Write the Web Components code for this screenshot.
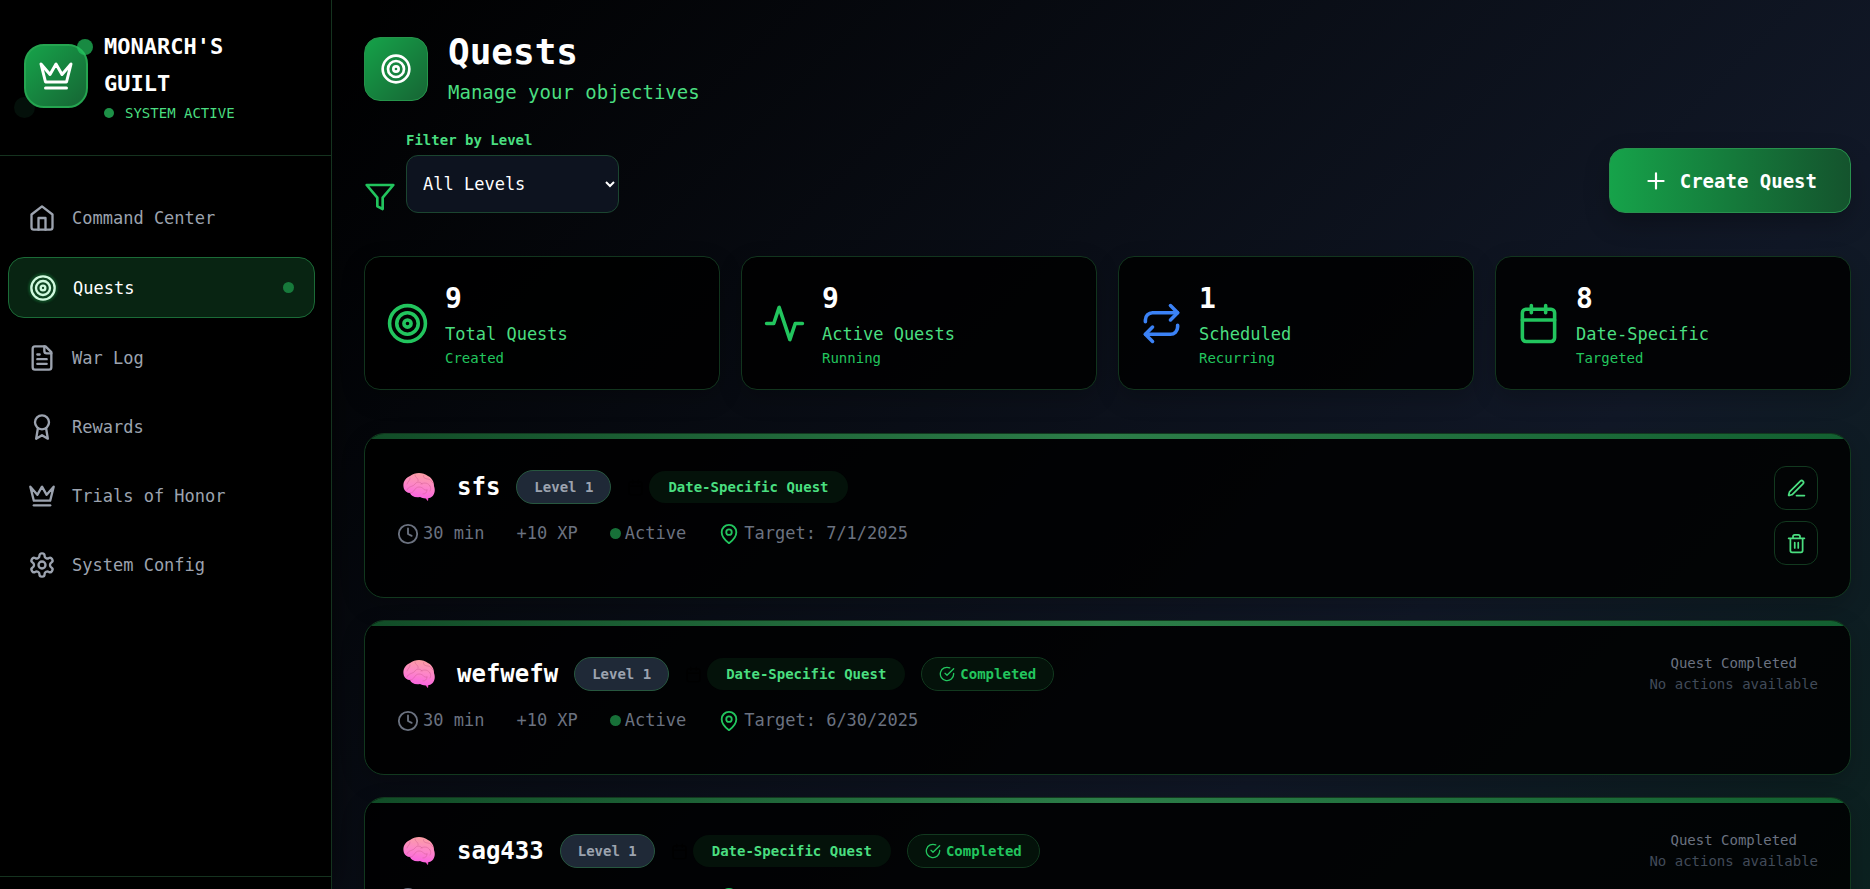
<!DOCTYPE html>
<html lang="en">
<head>
<meta charset="utf-8">
<meta name="viewport" content="width=device-width, initial-scale=1">
<title>Quests - Monarch's Guilt</title>
<style>
  body{
    margin: 0;
    background: #000;
    color: #fff;
    font-family: "DejaVu Sans Mono", "Liberation Mono", monospace;
    font-size: 17px;
  }
</style>
</head>
<body>
<guild-app>
  <guild-sidebar slot="sidebar">
    <nav-item icon="home">Command Center</nav-item>
    <nav-item icon="target" active>Quests</nav-item>
    <nav-item icon="file">War Log</nav-item>
    <nav-item icon="award">Rewards</nav-item>
    <nav-item icon="crown">Trials of Honor</nav-item>
    <nav-item icon="settings">System Config</nav-item>
  </guild-sidebar>

  <page-header icon="target">
    <span slot="title">Quests</span>
    <span slot="subtitle">Manage your objectives</span>
  </page-header>
  <quest-toolbar></quest-toolbar>
  <stat-grid>
    <stat-card icon="target" value="9" label="Total Quests" note="Created"></stat-card>
    <stat-card icon="activity" value="9" label="Active Quests" note="Running"></stat-card>
    <stat-card icon="repeat" value="1" label="Scheduled" note="Recurring" class="blue"></stat-card>
    <stat-card icon="calendar" value="8" label="Date-Specific" note="Targeted"></stat-card>
  </stat-grid>
  <quest-list>
    <quest-card level="1" time="30 min" xp="10" target="7/1/2025">sfs</quest-card>
    <quest-card level="1" time="30 min" xp="10" target="6/30/2025" completed>wefwefw</quest-card>
    <quest-card level="1" time="30 min" xp="10" target="6/30/2025" completed>sag433</quest-card>
  </quest-list>
</guild-app>

<script>
const ICONS = {
  home: '<path d="m3 9 9-7 9 7v11a2 2 0 0 1-2 2H5a2 2 0 0 1-2-2z"/><path d="M9 22V12h6v10"/>',
  target: '<circle cx="12" cy="12" r="10"/><circle cx="12" cy="12" r="6"/><circle cx="12" cy="12" r="2"/>',
  file: '<path d="M15 2H6a2 2 0 0 0-2 2v16a2 2 0 0 0 2 2h12a2 2 0 0 0 2-2V7z"/><path d="M14 2v4a2 2 0 0 0 2 2h4M10 9H8M16 13H8M16 17H8"/>',
  award: '<circle cx="12" cy="8" r="6"/><path d="M15.477 12.89 17 22l-5-3-5 3 1.523-9.11"/>',
  crown: '<path d="m2 4 3 12h14l3-12-6 7-4-7-4 7z"/><path d="M5 20h14"/>',
  settings: '<path d="M12.22 2h-.44a2 2 0 0 0-2 2v.18a2 2 0 0 1-1 1.73l-.43.25a2 2 0 0 1-2 0l-.15-.08a2 2 0 0 0-2.73.73l-.22.38a2 2 0 0 0 .73 2.73l.15.1a2 2 0 0 1 1 1.72v.51a2 2 0 0 1-1 1.74l-.15.09a2 2 0 0 0-.73 2.73l.22.38a2 2 0 0 0 2.73.73l.15-.08a2 2 0 0 1 2 0l.43.25a2 2 0 0 1 1 1.73V20a2 2 0 0 0 2 2h.44a2 2 0 0 0 2-2v-.18a2 2 0 0 1 1-1.73l.43-.25a2 2 0 0 1 2 0l.15.08a2 2 0 0 0 2.73-.73l.22-.39a2 2 0 0 0-.73-2.73l-.15-.08a2 2 0 0 1-1-1.74v-.5a2 2 0 0 1 1-1.74l.15-.09a2 2 0 0 0 .73-2.73l-.22-.38a2 2 0 0 0-2.73-.73l-.15.08a2 2 0 0 1-2 0l-.43-.25a2 2 0 0 1-1-1.73V4a2 2 0 0 0-2-2z"/><circle cx="12" cy="12" r="3"/>',
  filter: '<path d="M22 3H2l8 9.46V19l4 2v-8.54z"/>',
  plus: '<path d="M5 12h14M12 5v14"/>',
  activity: '<path d="M22 12h-4l-3 9L9 3l-3 9H2"/>',
  repeat: '<path d="m17 2 4 4-4 4"/><path d="M3 11v-1a4 4 0 0 1 4-4h14"/><path d="m7 22-4-4 4-4"/><path d="M21 13v1a4 4 0 0 1-4 4H3"/>',
  calendar: '<rect x="3" y="4" width="18" height="18" rx="2"/><path d="M16 2v4M8 2v4M3 10h18"/>',
  clock: '<circle cx="12" cy="12" r="10"/><path d="M12 6v6l4 2"/>',
  pin: '<path d="M20 10c0 6-8 12-8 12s-8-6-8-12a8 8 0 0 1 16 0z"/><circle cx="12" cy="10" r="3"/>',
  check: '<path d="M22 11.08V12a10 10 0 1 1-5.93-9.14"/><path d="M22 4 12 14.01l-3-3"/>',
  edit: '<path d="M12 20h9"/><path d="M16.376 3.622a1 1 0 0 1 3.002 3.002L7.368 18.635a2 2 0 0 1-.855.506l-2.872.838a.5.5 0 0 1-.62-.62l.838-2.872a2 2 0 0 1 .506-.854z"/>',
  trash: '<path d="M3 6h18M19 6v14a2 2 0 0 1-2 2H7a2 2 0 0 1-2-2V6M8 6V4a2 2 0 0 1 2-2h4a2 2 0 0 1 2 2v2M10 11v6M14 11v6"/>'
};

//Base de todos los componentes
class GuildElement extends HTMLElement{
  constructor(){
    super();
    this.attachShadow({ mode: "open" });
  }
  getAttr(name){
    return this.getAttribute(name) || "";
  }
  render(){
    const template = document.createElement("template");
    template.innerHTML = `${this.getStyles()}${this.getMarkup()}`;
    this.shadowRoot.replaceChildren(template.content.cloneNode(true));
  }
  connectedCallback(){
    this.render();
  }
}

class GuildIcon extends GuildElement{
  getMarkup(){
    return `<svg viewBox="0 0 24 24" aria-hidden="true">${ICONS[this.getAttr("name")]}</svg>`;
  }
  getStyles(){
    return `
      <style>
      :host{
        display: block;
        flex: none;
        width: var(--icon-size, 24px);
        height: var(--icon-size, 24px);
      }
      svg{
        display: block;
        width: 100%;
        height: 100%;
        fill: none;
        stroke: currentColor;
        stroke-width: 2;
        stroke-linecap: round;
        stroke-linejoin: round;
      }
      </style>
    `;
  }
}
customElements.define("guild-icon", GuildIcon);

class BrainIcon extends GuildElement{
  getMarkup(){
    return `
      <svg viewBox="0 0 32 28" aria-hidden="true">
        <defs>
          <linearGradient id="pink" x1=".6" y1="0" x2=".4" y2="1">
            <stop offset="0" stop-color="#fb9fa2"/>
            <stop offset=".5" stop-color="#fd86c8"/>
            <stop offset="1" stop-color="#fb62e2"/>
          </linearGradient>
        </defs>
        <path d="M19 20h7l-1 8c-2-1-2-4-4-6z" fill="#f04fc4"/>
        <path d="M1 16C-1 10 2 5 7 3c5-4 13-4 18 0 4 2 6 6 6 10 2 5 0 11-5 12-4 1-7 0-9-1-5 1-9-1-10-4-3 0-5-2-6-4z" fill="url(#pink)"/>
        <path d="M7 5c0 3-2 3-3 6M12 2c0 3 4 3 3 6M21 2c-2 2 1 4 4 4s3 3 5 4M4 17c1-4 6-3 8-6s6-2 7 0M7 20c5 0 4-6 9-6s4 4 8 3M18 11c4-2 7-1 9 2M24 17c0 3-2 4-4 4M27 13c1 2 1 3 0 5" fill="none" stroke="#cf5b91" stroke-width="1" stroke-linecap="round" opacity=".45"/>
      </svg>
    `;
  }
  getStyles(){
    return `
      <style>
      :host{
        display: block;
        flex: none;
        width: 32px;
        height: 28px;
      }
      svg{ display: block; }
      </style>
    `;
  }
}
customElements.define("brain-icon", BrainIcon);

class GuildApp extends GuildElement{
  getMarkup(){
    return `
      <slot name="sidebar"></slot>
      <main><slot></slot></main>
    `;
  }
  getStyles(){
    return `
      <style>
      :host{
        display: flex;
        height: 100vh;
        overflow: hidden;
      }
      main{
        flex: 1;
        min-width: 0;
        box-sizing: border-box;
        padding: 30px 19px 32px 32px;
        overflow-y: auto;
        scrollbar-width: none;
        background: linear-gradient(135deg, #000 0%, #111827 70%, #052e16 140%);
      }
      </style>
    `;
  }
}
customElements.define("guild-app", GuildApp);

class GuildSidebar extends GuildElement{
  getMarkup(){
    return `
      <header>
        <div class="logo">
          <div class="box"><guild-icon name="crown"></guild-icon></div>
        </div>
        <div>
          <h2>MONARCH'S<br>GUILT</h2>
          <p><i></i>SYSTEM ACTIVE</p>
        </div>
      </header>
      <nav><slot></slot></nav>
      <footer></footer>
    `;
  }
  getStyles(){
    return `
      <style>
      :host{
        display: flex;
        flex-direction: column;
        flex: none;
        width: 332px;
        box-sizing: border-box;
        background: #000;
        border-right: 1px solid #15331f;
        z-index: 1;
        box-shadow: 0 0 32px rgba(0,0,0,.5);
      }
      header{
        display: flex;
        align-items: center;
        gap: 16px;
        padding: 28px 24px 31px;
        border-bottom: 1px solid #15331f;
      }
      .logo{
        position: relative;
        flex: none;
      }
      .box{
        position: relative;
        display: flex;
        align-items: center;
        justify-content: center;
        box-sizing: border-box;
        width: 64px;
        height: 64px;
        border: 2px solid #25a550;
        border-radius: 20px;
        background: linear-gradient(135deg, #16a34a, #166534);
        --icon-size: 36px;
      }
      /* pulsing orbs around the logo */
      .logo::before, .logo::after{
        content: "";
        position: absolute;
        border-radius: 50%;
      }
      .logo::before{
        left: -10px;
        bottom: -10px;
        width: 21px;
        height: 21px;
        background: #04100a;
      }
      .logo::after{
        right: -5px;
        top: -5px;
        width: 16px;
        height: 16px;
        background: rgba(34,197,94,.7);
      }
      h2{
        margin: 0;
        font-size: 22px;
        line-height: 37px;
      }
      p{
        display: flex;
        align-items: center;
        gap: 11px;
        margin: 0;
        font-size: 14px;
        line-height: 22px;
        color: #4ade80;
      }
      i{
        width: 10px;
        height: 10px;
        border-radius: 50%;
        background: #1d9147;
      }
      nav{
        flex: 1;
        display: flex;
        flex-direction: column;
        gap: 8px;
        padding: 31px 16px 31px 8px;
      }
      footer{
        height: 12px;
        border-top: 1px solid #15331f;
      }
      </style>
    `;
  }
}
customElements.define("guild-sidebar", GuildSidebar);

class NavItem extends GuildElement{
  getMarkup(){
    return `
      <a href="#">
        <guild-icon name="${this.getAttr("icon")}"></guild-icon>
        <slot></slot>
      </a>
    `;
  }
  getStyles(){
    return `
      <style>
      :host{ display: block; }
      :host([active]){ margin: 1px 0; }
      a{
        display: flex;
        align-items: center;
        gap: 16px;
        box-sizing: border-box;
        height: 61px;
        padding: 0 20px;
        border-radius: 16px;
        color: #9ca3af;
        text-decoration: none;
        --icon-size: 28px;
      }
      :host([active]) a{
        border: 1px solid #1b6b37;
        background: #082412;
        color: #fff;
      }
      :host([active]) guild-icon{
        color: #d0f9de;
        border-radius: 50%;
        background: #0e4421;
        box-shadow: 0 0 2px 1px #0e4421;
      }
      :host([active]) a::after{
        content: "";
        width: 11px;
        height: 11px;
        margin-left: auto;
        border-radius: 50%;
        background: #177a3b;
      }
      </style>
    `;
  }
}
customElements.define("nav-item", NavItem);

class PageHeader extends GuildElement{
  getMarkup(){
    return `
      <div class="box"><guild-icon name="${this.getAttr("icon")}"></guild-icon></div>
      <div>
        <h1><slot name="title"></slot></h1>
        <p><slot name="subtitle"></slot></p>
      </div>
    `;
  }
  getStyles(){
    return `
      <style>
      :host{
        display: flex;
        align-items: center;
        gap: 20px;
        margin-bottom: 21px;
      }
      .box{
        display: flex;
        align-items: center;
        justify-content: center;
        box-sizing: border-box;
        width: 64px;
        height: 64px;
        border: 1px solid #26954b;
        border-radius: 16px;
        background: linear-gradient(135deg, #16a34a, #166534);
        --icon-size: 32px;
      }
      h1{
        margin: 0;
        font-size: 36px;
        line-height: 44px;
      }
      p{
        margin: 2px 0 0;
        font-size: 19px;
        line-height: 32px;
        color: #4ade80;
      }
      </style>
    `;
  }
}
customElements.define("page-header", PageHeader);

class QuestToolbar extends GuildElement{
  getMarkup(){
    return `
      <div class="filter">
        <guild-icon name="filter"></guild-icon>
        <div>
          <label for="level">Filter by Level</label>
          <select id="level">
            <option>All Levels</option>
            <option>Level 1</option>
            <option>Level 2</option>
            <option>Level 3</option>
          </select>
        </div>
      </div>
      <button type="button"><guild-icon name="plus"></guild-icon>Create Quest</button>
    `;
  }
  getStyles(){
    return `
      <style>
      :host{
        display: flex;
        align-items: flex-end;
        justify-content: space-between;
        margin-bottom: 43px;
      }
      .filter{
        display: flex;
        align-items: flex-end;
        gap: 10px;
        --icon-size: 32px;
      }
      .filter guild-icon{ color: #22c55e; }
      label{
        display: block;
        margin-bottom: 4px;
        font-size: 14px;
        font-weight: bold;
        line-height: 22px;
        color: #4ade80;
      }
      select{
        display: block;
        width: 213px;
        height: 58px;
        padding: 0 12px;
        border: 1px solid #1b4530;
        border-radius: 12px;
        background: #0d131f;
        color: #fff;
        font: inherit;
      }
      button{
        display: flex;
        align-items: center;
        gap: 11px;
        height: 65px;
        padding: 0 33px;
        border: 1px solid #28914d;
        border-radius: 16px;
        background: linear-gradient(90deg, #16a34a, #14532d) border-box;
        color: #fff;
        font: bold 19px "DejaVu Sans Mono", "Liberation Mono", monospace;
        box-shadow: 0 10px 24px rgba(0,0,0,.25);
        --icon-size: 26px;
      }
      </style>
    `;
  }
}
customElements.define("quest-toolbar", QuestToolbar);

class StatGrid extends GuildElement{
  getMarkup(){
    return `<slot></slot>`;
  }
  getStyles(){
    return `
      <style>
      :host{
        display: grid;
        grid-template-columns: repeat(4, 1fr);
        gap: 21px;
        margin-bottom: 43px;
      }
      </style>
    `;
  }
}
customElements.define("stat-grid", StatGrid);

class StatCard extends GuildElement{
  getMarkup(){
    return `
      <guild-icon name="${this.getAttr("icon")}"></guild-icon>
      <div>
        <strong>${this.getAttr("value")}</strong>
        <span>${this.getAttr("label")}</span>
        <small>${this.getAttr("note")}</small>
      </div>
    `;
  }
  getStyles(){
    return `
      <style>
      :host{
        display: flex;
        align-items: center;
        gap: 16px;
        padding: 20px 21px;
        border: 1px solid #12351e;
        border-radius: 16px;
        background: rgba(0,0,0,.85);
        box-shadow: 0 8px 24px rgba(0,0,0,.2);
        --icon-size: 43px;
      }
      guild-icon{ color: #22c55e; }
      :host(.blue) guild-icon{ color: #3b82f6; }
      strong, span, small{ display: block; }
      strong{
        font-size: 28px;
        line-height: 44px;
      }
      span{
        line-height: 27px;
        color: #4ade80;
      }
      small{
        font-size: 14px;
        line-height: 21px;
        color: #22c55e;
      }
      </style>
    `;
  }
}
customElements.define("stat-card", StatCard);

class QuestList extends GuildElement{
  getMarkup(){
    return `<slot></slot>`;
  }
  getStyles(){
    return `
      <style>
      :host{
        display: flex;
        flex-direction: column;
        gap: 22px;
      }
      </style>
    `;
  }
}
customElements.define("quest-list", QuestList);

class QuestCard extends GuildElement{
  getActions(){
    if(this.hasAttribute("completed")){
      return `
        <div class="done">
          <p>Quest Completed</p>
          <p>No actions available</p>
        </div>
      `;
    }
    return `
      <div class="actions">
        <button type="button" aria-label="Edit quest"><guild-icon name="edit"></guild-icon></button>
        <button type="button" aria-label="Delete quest"><guild-icon name="trash"></guild-icon></button>
      </div>
    `;
  }
  getMarkup(){
    const completed = this.hasAttribute("completed")
      ? `<span class="pill completed"><guild-icon name="check"></guild-icon>Completed</span>`
      : "";
    return `
      <div class="bar"></div>
      <article>
        <div class="info">
          <div class="top">
            <brain-icon></brain-icon>
            <h3><slot></slot></h3>
            <span class="pill level">Level ${this.getAttr("level")}</span>
            <div class="kind">
              <guild-icon name="calendar"></guild-icon>
              <span class="pill date">Date-Specific Quest</span>
            </div>
            ${completed}
          </div>
          <div class="meta">
            <span><guild-icon name="clock"></guild-icon>${this.getAttr("time")}</span>
            <span>+${this.getAttr("xp")} XP</span>
            <span><i></i>Active</span>
            <span><guild-icon name="pin" class="pin"></guild-icon>Target: ${this.getAttr("target")}</span>
          </div>
        </div>
        ${this.getActions()}
      </article>
    `;
  }
  getStyles(){
    return `
      <style>
      :host{
        display: block;
        position: relative;
        overflow: hidden;
        border: 1px solid #12391f;
        border-radius: 20px;
        background: rgba(0,0,0,.85);
        box-shadow: 0 8px 24px rgba(0,0,0,.2);
      }
      /* accent strip over the top edge of the card */
      .bar{
        position: absolute;
        top: 0;
        left: 0;
        right: 0;
        height: 5px;
        background: linear-gradient(90deg, #114c27, #2c7d48, #126030);
      }
      article{
        display: flex;
        justify-content: space-between;
        align-items: flex-start;
        padding: 32px;
      }
      .top{
        display: flex;
        align-items: center;
        gap: 16px;
        height: 42px;
      }
      brain-icon{ margin: 0 6px; }
      h3{
        margin: 0;
        font-size: 24px;
      }
      .pill{
        display: flex;
        align-items: center;
        box-sizing: border-box;
        height: 34px;
        padding: 0 17px;
        border-radius: 17px;
        font-size: 14px;
        font-weight: bold;
      }
      .level{
        border: 1px solid #27573f;
        background: #1f2937;
        color: #9ca3af;
      }
      .kind{
        display: flex;
        align-items: center;
        gap: 5px;
        color: #000;
        --icon-size: 17px;
      }
      .date{
        height: 32px;
        padding: 0 19px;
        background: #04120a;
        color: #4ade80;
      }
      .completed{
        gap: 5px;
        border: 1px solid #12391f;
        background: #04120a;
        color: #22c55e;
        --icon-size: 16px;
      }
      .meta{
        display: flex;
        gap: 32px;
        margin: 12px 0 8px;
        line-height: 27px;
        color: #6b7280;
        --icon-size: 22px;
      }
      .meta span{
        display: flex;
        align-items: center;
        gap: 4px;
      }
      .meta i{
        width: 11px;
        height: 11px;
        border-radius: 50%;
        background: #177038;
      }
      .pin{ color: #22c55e; }
      .actions{
        display: flex;
        flex-direction: column;
        gap: 11px;
      }
      button{
        display: flex;
        align-items: center;
        justify-content: center;
        width: 44px;
        height: 44px;
        padding: 0;
        border: 1px solid #12391f;
        border-radius: 12px;
        background: transparent;
        color: #4ade80;
        --icon-size: 21px;
      }
      .done{
        font-size: 14px;
        text-align: center;
        color: #6b7280;
      }
      .done p{
        margin: 0;
        line-height: 21px;
      }
      .done p + p{ color: #414b59; }
      </style>
    `;
  }
}
customElements.define("quest-card", QuestCard);
</script>
</body>
</html>
